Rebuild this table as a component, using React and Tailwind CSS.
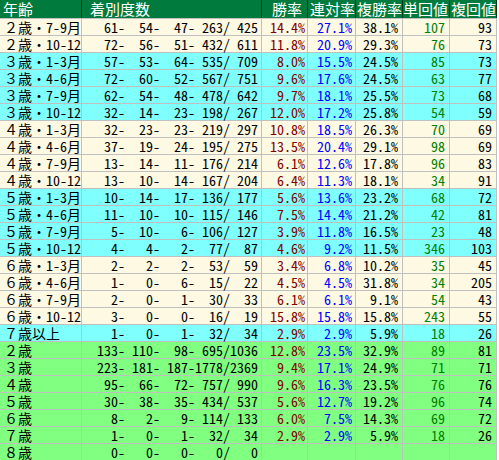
import React from 'react';

/* 年齢別成績テーブル */
const COLS = 'grid grid-cols-[81px_179px_45px_47px_46px_46px_46px]';

const CREAM = 'bg-[#fdf9e2]';
const CYAN = 'bg-[#80ffff]';
const GREEN = 'bg-[#80ff80]';

const rows = [
  ['２歳・7-9月', [61, 54, 47, 263, 425], '14.4%', '27.1%', '38.1%', '107', '93', CREAM],
  ['２歳・10-12', [72, 56, 51, 432, 611], '11.8%', '20.9%', '29.3%', '76', '73', CREAM],
  ['３歳・1-3月', [57, 53, 64, 535, 709], '8.0%', '15.5%', '24.5%', '85', '73', CYAN],
  ['３歳・4-6月', [72, 60, 52, 567, 751], '9.6%', '17.6%', '24.5%', '63', '77', CYAN],
  ['３歳・7-9月', [62, 54, 48, 478, 642], '9.7%', '18.1%', '25.5%', '73', '68', CYAN],
  ['３歳・10-12', [32, 14, 23, 198, 267], '12.0%', '17.2%', '25.8%', '54', '59', CYAN],
  ['４歳・1-3月', [32, 23, 23, 219, 297], '10.8%', '18.5%', '26.3%', '70', '69', CREAM],
  ['４歳・4-6月', [37, 19, 24, 195, 275], '13.5%', '20.4%', '29.1%', '98', '69', CREAM],
  ['４歳・7-9月', [13, 14, 11, 176, 214], '6.1%', '12.6%', '17.8%', '96', '83', CREAM],
  ['４歳・10-12', [13, 10, 14, 167, 204], '6.4%', '11.3%', '18.1%', '34', '91', CREAM],
  ['５歳・1-3月', [10, 14, 17, 136, 177], '5.6%', '13.6%', '23.2%', '68', '72', CYAN],
  ['５歳・4-6月', [11, 10, 10, 115, 146], '7.5%', '14.4%', '21.2%', '42', '81', CYAN],
  ['５歳・7-9月', [5, 10, 6, 106, 127], '3.9%', '11.8%', '16.5%', '23', '48', CYAN],
  ['５歳・10-12', [4, 4, 2, 77, 87], '4.6%', '9.2%', '11.5%', '346', '103', CYAN],
  ['６歳・1-3月', [2, 2, 2, 53, 59], '3.4%', '6.8%', '10.2%', '35', '45', CREAM],
  ['６歳・4-6月', [1, 0, 6, 15, 22], '4.5%', '4.5%', '31.8%', '34', '205', CREAM],
  ['６歳・7-9月', [2, 0, 1, 30, 33], '6.1%', '6.1%', '9.1%', '54', '43', CREAM],
  ['６歳・10-12', [3, 0, 0, 16, 19], '15.8%', '15.8%', '15.8%', '243', '55', CREAM],
  ['７歳以上', [1, 0, 1, 32, 34], '2.9%', '2.9%', '5.9%', '18', '26', CYAN],
  ['２歳', [133, 110, 98, 695, 1036], '12.8%', '23.5%', '32.9%', '89', '81', GREEN],
  ['３歳', [223, 181, 187, 1778, 2369], '9.4%', '17.1%', '24.9%', '71', '71', GREEN],
  ['４歳', [95, 66, 72, 757, 990], '9.6%', '16.3%', '23.5%', '76', '76', GREEN],
  ['５歳', [30, 38, 35, 434, 537], '5.6%', '12.7%', '19.2%', '96', '74', GREEN],
  ['６歳', [8, 2, 9, 114, 133], '6.0%', '7.5%', '14.3%', '69', '72', GREEN],
  ['７歳', [1, 0, 1, 32, 34], '2.9%', '2.9%', '5.9%', '18', '26', GREEN],
  ['８歳', [0, 0, 0, 0, 0], '', '', '', '', '', GREEN],
];

// "%4d-%4d-%4d-%4d/%4d" を固定幅のスパンで組む
const Counts = ({ n }) => (
  <div className="flex justify-end pr-[3px]">
    {n.map((v, i) => (
      <React.Fragment key={i}>
        <span className="w-[28px] text-right">{v}</span>
        {i < 4 && <span className="w-[7px] text-center">{i === 3 ? '/' : '-'}</span>}
      </React.Fragment>
    ))}
  </div>
);

export default function App() {
  return (
    <div className="w-[499px] h-[460px] bg-white overflow-hidden font-['Noto_Sans_Mono_CJK_JP','Noto_Sans_CJK_JP',monospace]">
      {/* header */}
      <div className={`${COLS} gap-x-px bg-[#003a1c] w-[497px] pr-px border-b border-[#c0c0c0] text-white text-[15px] leading-[18px] whitespace-nowrap`}>
        <div className="bg-[#007b3d] h-[18px] pl-[3px]">年齢</div>
        <div className="bg-[#007b3d] h-[18px] pl-[8px]">着別度数</div>
        <div className="bg-[#007b3d] h-[18px] pl-[10px]">勝率</div>
        <div className="bg-[#007b3d] h-[18px] pl-[2px] overflow-hidden">連対率</div>
        <div className="bg-[#007b3d] h-[18px] pl-[1px] overflow-hidden">複勝率</div>
        <div className="bg-[#007b3d] h-[18px] pl-[0px] overflow-hidden">単回値</div>
        <div className="bg-[#007b3d] h-[18px] pl-[1px] overflow-hidden">複回値</div>
      </div>

      {/* body */}
      <div className={`${COLS} gap-px bg-[#c0c0c0] w-[497px] pr-px text-[14px] leading-[16px] text-black`}>
        {rows.map(([age, n, win, ren, fuku, tan, fk, bg]) => (
          <React.Fragment key={age}>
            <div className={`${bg} h-[16px] pl-[4px] whitespace-nowrap`}>{age}</div>
            <div className={`${bg} h-[16px]`}><Counts n={n} /></div>
            <div className={`${bg} h-[16px] text-right pr-[2px] text-[#800000]`}>{win}</div>
            <div className={`${bg} h-[16px] text-right pr-[3px] text-[#0000ff]`}>{ren}</div>
            <div className={`${bg} h-[16px] text-right pr-[4px]`}>{fuku}</div>
            <div className={`${bg} h-[16px] text-right pr-[4px] text-[#008000]`}>{tan}</div>
            <div className={`${bg} h-[16px] text-right pr-[4px]`}>{fk}</div>
          </React.Fragment>
        ))}
      </div>
    </div>
  );
}
